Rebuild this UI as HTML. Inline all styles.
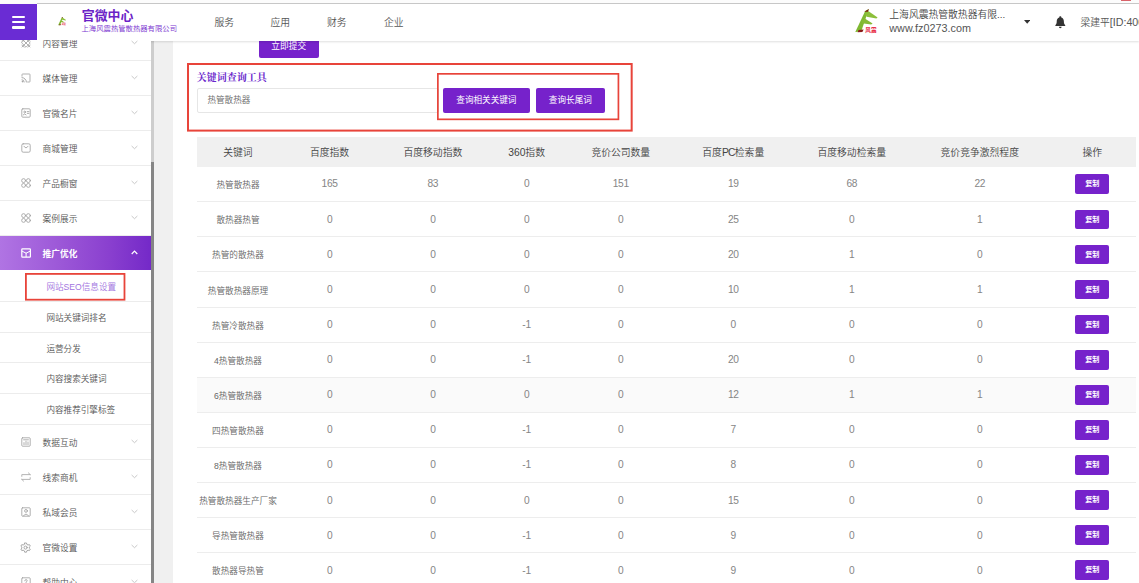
<!DOCTYPE html>
<html lang="zh-CN">
<head>
<meta charset="utf-8">
<title>官微中心</title>
<style>
*{box-sizing:border-box;margin:0;padding:0}
html,body{width:1139px;height:583px;overflow:hidden;background:#fff}
body{font-family:"Liberation Sans","Noto Sans CJK SC",sans-serif;font-weight:350;color:#555;position:relative;-webkit-font-smoothing:antialiased}
.abs{position:absolute}
/* top strip */
#strip{left:0;top:0;width:1139px;height:4px;background:#fcfcfc}
#stripline{left:37px;top:2.8px;width:1102px;height:1px;background:#c9c9c9}
#redtab{left:1121px;top:0;width:10px;height:1px;background:#d9636a}
/* main bg */
#graybg{left:154px;top:41px;width:985px;height:542px;background:#f0f0f0}
#card{left:172.5px;top:41px;width:967px;height:542px;background:#fff}
/* header */
#header{left:0;top:4px;width:1139px;height:36.5px;background:#fff;box-shadow:0 1px 2px rgba(0,0,0,.13);z-index:10}
#burger{left:0;top:3.8px;width:37px;height:36.6px;background:#6a2cd4;z-index:11}
#burger i{position:absolute;left:12px;width:13px;height:2.2px;background:#fff;border-radius:1px}
#title{left:81.8px;top:7.6px;font-size:12.9px;font-weight:700;color:#6a22c6;line-height:16px;white-space:nowrap;z-index:12}
#subtitle{left:81.5px;top:23.5px;font-size:7.35px;color:#7a35d0;line-height:9px;white-space:nowrap;z-index:12}
.nav{top:16.3px;font-size:9.8px;color:#555;line-height:14px;white-space:nowrap;z-index:12}
.hr1{left:889.3px;top:8px;font-size:9.8px;color:#444;line-height:14px;white-space:nowrap;z-index:12}
.hr2{left:889.3px;top:21.1px;font-size:10.8px;color:#555;line-height:14px;white-space:nowrap;z-index:12}
#user{left:1080.4px;top:15.3px;font-size:9.8px;color:#555;line-height:14px;white-space:nowrap;z-index:12}
/* sidebar */
#sidebar{left:0;top:40.2px;width:151px;height:542.8px;z-index:11;background:#fff;overflow:hidden}
.mi{position:absolute;left:0;width:151px;height:35px;border-bottom:1px solid #ececec;font-size:8.7px;color:#555;line-height:36.6px;padding-left:42.6px;white-space:nowrap}
.mi svg.ic{position:absolute;left:20.8px;top:12.4px;width:10px;height:10px}
.mi svg.ch{position:absolute;left:131px;top:14.5px;width:7px;height:5px}
.mi.act{background:linear-gradient(90deg,#b074e3 0%,#9d59d8 38%,#8a40cf 72%,#7429c8 100%);color:#fff;font-weight:700;border-bottom:none}
.si{position:absolute;left:0;width:151px;height:30.8px;border-bottom:1px solid #ececec;font-size:8.6px;color:#555;line-height:32.6px;padding-left:46.4px;white-space:nowrap}
#sbtrack{left:151px;top:41px;width:3px;height:542px;background:#cdcdcd}
#sbthumb{left:151px;top:162px;width:3px;height:421px;background:#858585}
/* red boxes */
.red{border:2px solid #e93a30}
/* buttons */
.btn{position:absolute;background:#7622cb;color:#fff;text-align:center;white-space:nowrap;border-radius:2px}
/* table */
#tbl{left:196.7px;top:137.1px;width:939.6px}
table{border-collapse:collapse;table-layout:fixed;width:939.6px}
th{height:29.6px;background:#f0f0f0;font-size:9.8px;font-weight:350;color:#444;text-align:center;padding:1px 0 0 0}
td{height:35.1px;border-bottom:1px solid #ededed;font-size:10.2px;letter-spacing:-0.3px;color:#858585;text-align:center;padding:0;position:relative}
td.k{color:#666;font-size:8.65px;letter-spacing:0;font-weight:350}
tr.hov td{background:#fafafa}
.L{font-size:10.3px;font-weight:400}
td .btn{position:relative;display:inline-block;width:34px;height:19.6px;line-height:21.4px;font-size:7.1px;letter-spacing:0;font-weight:700;vertical-align:middle}
</style>
</head>
<body>
<div class="abs" id="graybg"></div>
<div class="abs" id="card"></div>

<!-- sidebar -->
<div class="abs" id="sidebar"><div class="abs" style="left:0;top:1.8px;width:151px;height:545px">
  <div class="mi" style="top:-16px;line-height:37.4px">内容管理<svg class="ic" viewBox="0 0 10 10"><g fill="none" stroke="#a2a2a2" stroke-width="0.85" stroke-linecap="round" stroke-linejoin="round"><path d="M1 1 L9 9 M9 1 L1 9 M5 0.8 L9.2 5 L5 9.2 L0.8 5 Z M3 0.8 L0.8 3 M7 0.8 L9.2 3 M0.8 7 L3 9.2 M9.2 7 L7 9.2"/></g></svg><svg class="ch" viewBox="0 0 7 5"><path d="M0.6 1 L3.5 3.7 L6.4 1" fill="none" stroke="#c2c2c2" stroke-width="0.9"/></svg></div>
  <div class="mi" style="top:19px">媒体管理<svg class="ic" viewBox="0 0 10 10"><g fill="none" stroke="#a2a2a2" stroke-width="0.85" stroke-linecap="round" stroke-linejoin="round"><path d="M1 3.2 V1.6 Q1 1 1.6 1 H8.4 Q9 1 9 1.6 V8.4 Q9 9 8.4 9 H6.6"/><path d="M1 4.6 A4.4 4.4 0 0 1 5.4 9" stroke-width="0.95"/><path d="M1 6.8 A2.2 2.2 0 0 1 3.2 9" stroke-width="0.95"/><circle cx="1.3" cy="8.7" r="0.35" fill="#a9a9a9"/></g></svg><svg class="ch" viewBox="0 0 7 5"><path d="M0.6 1 L3.5 3.7 L6.4 1" fill="none" stroke="#c2c2c2" stroke-width="0.9"/></svg></div>
  <div class="mi" style="top:54px">官微名片<svg class="ic" viewBox="0 0 10 10"><g fill="none" stroke="#a2a2a2" stroke-width="0.85" stroke-linecap="round" stroke-linejoin="round"><rect x="0.8" y="0.8" width="8.4" height="8.4" rx="1"/><circle cx="3.7" cy="4" r="0.9"/><path d="M2.2 6.8 Q3.7 4.9 5.2 6.8"/><path d="M6.3 3.6 H7.9 M6.3 5.4 H7.9"/></g></svg><svg class="ch" viewBox="0 0 7 5"><path d="M0.6 1 L3.5 3.7 L6.4 1" fill="none" stroke="#c2c2c2" stroke-width="0.9"/></svg></div>
  <div class="mi" style="top:89px">商城管理<svg class="ic" viewBox="0 0 10 10"><g fill="none" stroke="#a2a2a2" stroke-width="0.85" stroke-linecap="round" stroke-linejoin="round"><rect x="0.8" y="0.8" width="8.4" height="8.4" rx="1.4"/><path d="M3 3.3 Q5 6.6 7 3.3"/></g></svg><svg class="ch" viewBox="0 0 7 5"><path d="M0.6 1 L3.5 3.7 L6.4 1" fill="none" stroke="#c2c2c2" stroke-width="0.9"/></svg></div>
  <div class="mi" style="top:124px">产品橱窗<svg class="ic" viewBox="0 0 10 10"><g fill="none" stroke="#a2a2a2" stroke-width="0.85" stroke-linecap="round" stroke-linejoin="round"><circle cx="2.6" cy="2.6" r="1.95"/><circle cx="7.4" cy="2.6" r="1.95"/><circle cx="2.6" cy="7.4" r="1.95"/><circle cx="7.4" cy="7.4" r="1.95"/></g></svg><svg class="ch" viewBox="0 0 7 5"><path d="M0.6 1 L3.5 3.7 L6.4 1" fill="none" stroke="#c2c2c2" stroke-width="0.9"/></svg></div>
  <div class="mi" style="top:159px">案例展示<svg class="ic" viewBox="0 0 10 10"><g fill="none" stroke="#a2a2a2" stroke-width="0.85" stroke-linecap="round" stroke-linejoin="round"><circle cx="2.6" cy="2.6" r="1.95"/><circle cx="7.4" cy="2.6" r="1.95"/><circle cx="2.6" cy="7.4" r="1.95"/><circle cx="7.4" cy="7.4" r="1.95"/></g></svg><svg class="ch" viewBox="0 0 7 5"><path d="M0.6 1 L3.5 3.7 L6.4 1" fill="none" stroke="#c2c2c2" stroke-width="0.9"/></svg></div>
  <div class="mi act" style="top:194px;height:34.2px;line-height:36px">推广优化<svg class="ic" viewBox="0 0 10 10"><g fill="none" stroke="#fff" stroke-width="1.2" stroke-linejoin="round" stroke-linecap="round"><rect x="0.8" y="0.9" width="8.6" height="8.2" rx="0.6"/><path d="M1.2 3.2 L5.1 5.2 L9 3.2 M5.1 5.2 V8.8" stroke-width="1"/></g></svg><svg class="ch" viewBox="0 0 7 5"><path d="M0.7 4 L3.5 1.2 L6.3 4" fill="none" stroke="#fff" stroke-width="1.2"/></svg></div>
  <div class="si" style="top:229px;color:#a274e0">网站SEO信息设置</div>
  <div class="si" style="top:259.8px">网站关键词排名</div>
  <div class="si" style="top:290.6px">运营分发</div>
  <div class="si" style="top:321.4px">内容搜索关键词</div>
  <div class="si" style="top:352.2px">内容推荐引擎标签</div>
  <div class="mi" style="top:383px">数据互动<svg class="ic" viewBox="0 0 10 10"><g fill="none" stroke="#a2a2a2" stroke-width="0.85" stroke-linecap="round" stroke-linejoin="round"><rect x="0.8" y="0.8" width="8.4" height="8.4" rx="0.8"/><path d="M3 7.6 V5.6 M5 7.6 V4.2 M7 7.6 V5 M2.6 2.8 H7.4"/></g></svg><svg class="ch" viewBox="0 0 7 5"><path d="M0.6 1 L3.5 3.7 L6.4 1" fill="none" stroke="#c2c2c2" stroke-width="0.9"/></svg></div>
  <div class="mi" style="top:418px">线索商机<svg class="ic" viewBox="0 0 10 10"><g fill="none" stroke="#a9a9a9" stroke-width="0.85" stroke-linecap="round" stroke-linejoin="round"><path d="M0.8 4.4 V2.6 H9.2 M7.4 0.9 L9.2 2.6"/><path d="M9.2 5.6 V7.4 H0.8 M2.6 9.1 L0.8 7.4"/></g></svg><svg class="ch" viewBox="0 0 7 5"><path d="M0.6 1 L3.5 3.7 L6.4 1" fill="none" stroke="#c2c2c2" stroke-width="0.9"/></svg></div>
  <div class="mi" style="top:453px">私域会员<svg class="ic" viewBox="0 0 10 10"><g fill="none" stroke="#a2a2a2" stroke-width="0.85" stroke-linecap="round" stroke-linejoin="round"><rect x="0.8" y="0.8" width="8.4" height="8.4" rx="0.8"/><circle cx="5" cy="3.9" r="1.4"/><path d="M2.4 9 Q5 5 7.6 9"/></g></svg><svg class="ch" viewBox="0 0 7 5"><path d="M0.6 1 L3.5 3.7 L6.4 1" fill="none" stroke="#c2c2c2" stroke-width="0.9"/></svg></div>
  <div class="mi" style="top:488px">官微设置<svg class="ic" style="left:20.2px;top:11.8px;width:11.2px;height:11.2px" viewBox="0 0 10 10"><g fill="none" stroke="#a2a2a2" stroke-width="0.85" stroke-linecap="round" stroke-linejoin="round"><circle cx="5" cy="5" r="1.4"/><path d="M4.2 0.9 H5.8 L6.1 2.1 L7.2 2.7 L8.4 2.3 L9.2 3.7 L8.3 4.5 V5.5 L9.2 6.3 L8.4 7.7 L7.2 7.3 L6.1 7.9 L5.8 9.1 H4.2 L3.9 7.9 L2.8 7.3 L1.6 7.7 L0.8 6.3 L1.7 5.5 V4.5 L0.8 3.7 L1.6 2.3 L2.8 2.7 L3.9 2.1 Z"/></g></svg><svg class="ch" viewBox="0 0 7 5"><path d="M0.6 1 L3.5 3.7 L6.4 1" fill="none" stroke="#c2c2c2" stroke-width="0.9"/></svg></div>
  <div class="mi" style="top:523px">帮助中心<svg class="ic" viewBox="0 0 10 10"><g fill="none" stroke="#a2a2a2" stroke-width="0.85" stroke-linecap="round" stroke-linejoin="round"><rect x="0.8" y="0.8" width="8.4" height="8.4" rx="0.8"/><path d="M3.8 3.8 Q3.8 2.6 5 2.6 Q6.2 2.6 6.2 3.7 Q6.2 4.5 5 5.2 V6"/></g></svg><svg class="ch" viewBox="0 0 7 5"><path d="M0.6 1 L3.5 3.7 L6.4 1" fill="none" stroke="#c2c2c2" stroke-width="0.9"/></svg></div>
  <svg class="abs" style="left:25.4px;top:231.2px;width:100.4px;height:27.6px;overflow:visible" viewBox="0 0 100.4 27.6"><rect x="0.9" y="0.9" width="98.6" height="25.8" fill="none" stroke="#e8443a" stroke-width="1.8"/></svg>
</div></div>
<div class="abs" id="sbtrack"></div>
<div class="abs" id="sbthumb"></div>

<!-- content -->
<div class="btn" style="left:258.6px;top:30px;width:60.2px;height:28.4px;font-size:8.7px;font-weight:400;line-height:14px;padding-top:8.7px">立即提交</div>
<svg class="abs" style="left:187.3px;top:62.7px;width:445.7px;height:68.6px;overflow:visible" viewBox="0 0 445.7 68.6"><rect x="1.0" y="1.0" width="443.7" height="66.6" fill="none" stroke="#e8443a" stroke-width="2"/></svg>
<div class="abs" style="left:196.8px;top:70.8px;font-family:'Liberation Serif','Noto Serif CJK SC',serif;font-weight:700;font-size:10px;color:#6a26cc;line-height:14px;white-space:nowrap">关键词查询工具</div>
<div class="abs" style="left:197.2px;top:88px;width:241.4px;height:25px;border:1px solid #e6e6e6;border-radius:2px;font-size:8.6px;color:#6c6c6c;line-height:23.4px;padding-left:9.2px">热管散热器</div>
<svg class="abs" style="left:436.6px;top:72.8px;width:182.3px;height:47.2px;overflow:visible" viewBox="0 0 182.3 47.2"><rect x="0.85" y="0.85" width="180.6" height="45.5" fill="none" stroke="#e8443a" stroke-width="1.7"/></svg>
<div class="btn" style="left:443.2px;top:87.9px;width:86.4px;height:25.1px;font-size:8.6px;font-weight:400;line-height:25.1px">查询相关关键词</div>
<div class="btn" style="left:535.7px;top:87.9px;width:69.3px;height:25.1px;font-size:8.6px;font-weight:400;line-height:25.1px">查询长尾词</div>

<div class="abs" id="tbl">
<table>
<colgroup><col style="width:82.6px"><col style="width:100.6px"><col style="width:106px"><col style="width:81.4px"><col style="width:107px"><col style="width:118px"><col style="width:119px"><col style="width:137px"><col style="width:88px"></colgroup>
<thead><tr><th>关键词</th><th>百度指数</th><th>百度移动指数</th><th><span class="L">360</span>指数</th><th>竞价公司数量</th><th>百度<span class="L" style="letter-spacing:-0.7px">PC</span>检索量</th><th>百度移动检索量</th><th>竞价竞争激烈程度</th><th>操作</th></tr></thead>
<tbody>
<tr><td class="k">热管散热器</td><td>165</td><td>83</td><td>0</td><td>151</td><td>19</td><td>68</td><td>22</td><td><span class="btn">复制</span></td></tr>
<tr><td class="k">散热器热管</td><td>0</td><td>0</td><td>0</td><td>0</td><td>25</td><td>0</td><td>1</td><td><span class="btn">复制</span></td></tr>
<tr><td class="k">热管的散热器</td><td>0</td><td>0</td><td>0</td><td>0</td><td>20</td><td>1</td><td>0</td><td><span class="btn">复制</span></td></tr>
<tr><td class="k">热管散热器原理</td><td>0</td><td>0</td><td>0</td><td>0</td><td>10</td><td>1</td><td>1</td><td><span class="btn">复制</span></td></tr>
<tr><td class="k">热管冷散热器</td><td>0</td><td>0</td><td>-1</td><td>0</td><td>0</td><td>0</td><td>0</td><td><span class="btn">复制</span></td></tr>
<tr><td class="k">4热管散热器</td><td>0</td><td>0</td><td>-1</td><td>0</td><td>20</td><td>0</td><td>0</td><td><span class="btn">复制</span></td></tr>
<tr class="hov"><td class="k">6热管散热器</td><td>0</td><td>0</td><td>0</td><td>0</td><td>12</td><td>1</td><td>1</td><td><span class="btn">复制</span></td></tr>
<tr><td class="k">四热管散热器</td><td>0</td><td>0</td><td>-1</td><td>0</td><td>7</td><td>0</td><td>0</td><td><span class="btn">复制</span></td></tr>
<tr><td class="k">8热管散热器</td><td>0</td><td>0</td><td>-1</td><td>0</td><td>8</td><td>0</td><td>0</td><td><span class="btn">复制</span></td></tr>
<tr><td class="k">热管散热器生产厂家</td><td>0</td><td>0</td><td>0</td><td>0</td><td>15</td><td>0</td><td>0</td><td><span class="btn">复制</span></td></tr>
<tr><td class="k">导热管散热器</td><td>0</td><td>0</td><td>-1</td><td>0</td><td>9</td><td>0</td><td>0</td><td><span class="btn">复制</span></td></tr>
<tr><td class="k">散热器导热管</td><td>0</td><td>0</td><td>-1</td><td>0</td><td>9</td><td>0</td><td>0</td><td><span class="btn">复制</span></td></tr>
</tbody>
</table>
</div>

<!-- header -->
<div class="abs" id="strip"></div>
<div class="abs" id="redtab"></div>
<div class="abs" id="header"></div>
<div class="abs" id="stripline"></div>
<div class="abs" id="burger"><i style="top:12.2px"></i><i style="top:17.5px"></i><i style="top:22.7px"></i></div>
<svg class="abs" style="left:58.3px;top:15.8px;width:8.6px;height:10.6px;z-index:12" viewBox="0 0 24 26"><polygon points="10.2,3 13.8,1 6.2,23.4 0.3,24" fill="#7fb832"/><polygon points="10,5.2 13.2,3 22.6,9.6 21.4,10.6 11.6,8.8" fill="#8cbf3a"/><polygon points="7.6,12.2 9.8,10.4 17.6,15.6 16.2,16.6 6.8,15.2" fill="#86ba36"/><polygon points="9.2,3.8 13.9,0.9 12.9,3.8" fill="#7c1d12"/><polygon points="3.6,22 8.6,21.4 7.4,24 2.6,24.2" fill="#8a1c18"/><text x="10.3" y="23.6" font-size="5.6" font-weight="700" fill="#e8304a" font-family="Liberation Sans,Noto Sans CJK SC,sans-serif">风震</text></svg>
<svg class="abs" style="left:855px;top:8px;width:24px;height:26px;z-index:12" viewBox="0 0 24 26"><polygon points="10.2,3 13.8,1 6.2,23.4 0.3,24" fill="#7fb832"/><polygon points="10,5.2 13.2,3 22.6,9.6 21.4,10.6 11.6,8.8" fill="#8cbf3a"/><polygon points="7.6,12.2 9.8,10.4 17.6,15.6 16.2,16.6 6.8,15.2" fill="#86ba36"/><polygon points="9.2,3.8 13.9,0.9 12.9,3.8" fill="#7c1d12"/><polygon points="3.6,22 8.6,21.4 7.4,24 2.6,24.2" fill="#8a1c18"/><text x="10.3" y="23.6" font-size="5.6" font-weight="700" fill="#e8304a" font-family="Liberation Sans,Noto Sans CJK SC,sans-serif">风震</text></svg>
<svg class="abs" style="left:1023.6px;top:20px;width:6.4px;height:3.8px;z-index:12" viewBox="0 0 6.4 3.8"><polygon points="0,0 6.4,0 3.2,3.8" fill="#333"/></svg>
<svg class="abs" style="left:1055.2px;top:15.8px;width:10.6px;height:12.8px;z-index:12" viewBox="0 0 11.6 14"><path d="M5.8 0.4 C6.5 0.4 6.9 0.9 6.9 1.5 C8.9 2.1 9.7 3.8 9.7 5.8 C9.7 8.4 10.3 9.3 11.2 10.1 V11 H0.4 V10.1 C1.3 9.3 1.9 8.4 1.9 5.8 C1.9 3.8 2.7 2.1 4.7 1.5 C4.7 0.9 5.1 0.4 5.8 0.4 Z M4.3 11.8 H7.3 C7.3 12.7 6.7 13.4 5.8 13.4 C4.9 13.4 4.3 12.7 4.3 11.8 Z" fill="#333"/></svg>
<div class="abs" id="title">官微中心</div>
<div class="abs" id="subtitle">上海风震热管散热器有限公司</div>
<div class="abs nav" style="left:214.5px">服务</div>
<div class="abs nav" style="left:270.5px">应用</div>
<div class="abs nav" style="left:327px">财务</div>
<div class="abs nav" style="left:384px">企业</div>
<div class="abs hr1">上海风震热管散热器有限...</div>
<div class="abs hr2">www.fz0273.com</div>
<div class="abs" id="user">梁建平<span style="font-size:10.7px">[ID:4006]</span></div>
</body>
</html>
